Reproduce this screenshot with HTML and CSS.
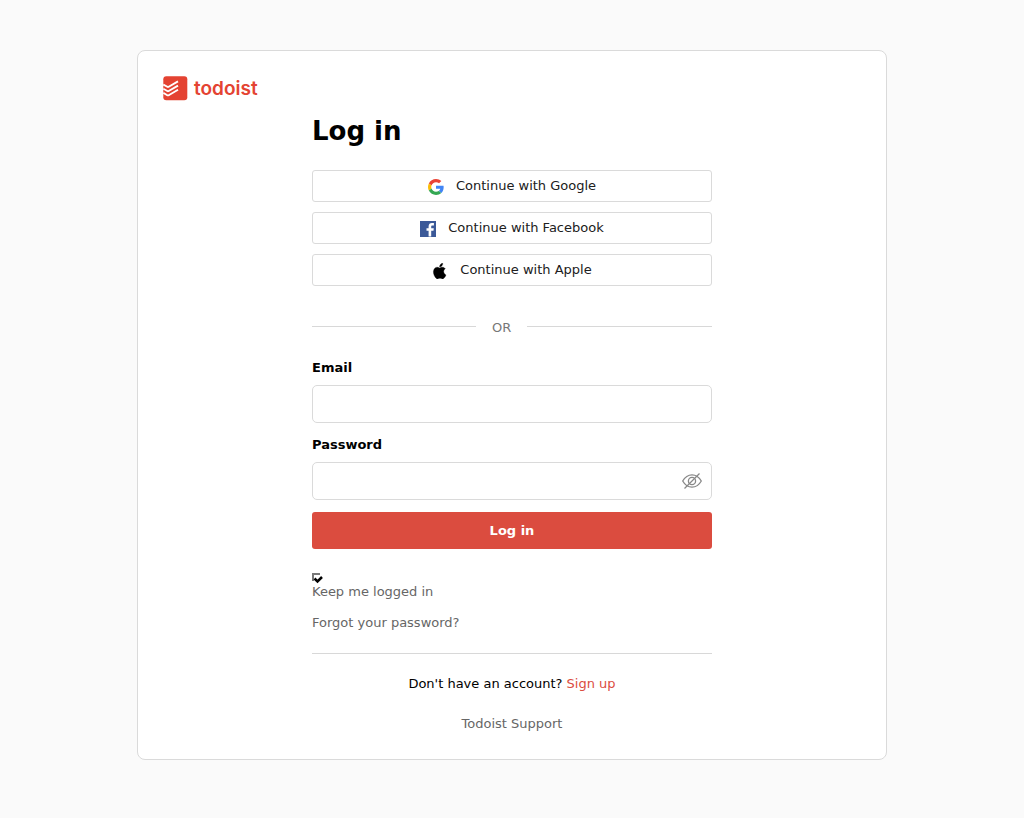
FILE: index.html
```html
<!DOCTYPE html>
<html lang="en">
<head>
<meta charset="utf-8">
<meta name="viewport" content="width=device-width, initial-scale=1">
<title>Todoist: Log in</title>
<link rel="stylesheet" href="styles.css">
</head>
<body>
<main class="card">
  <a class="brand" href="#" aria-label="Todoist home">
    <svg class="brand-mark" viewBox="0 0 25 25" aria-hidden="true">
      <rect x="0.3" y="0.3" width="24" height="24" rx="3" fill="#e44332"/>
      <g fill="none" stroke="#fff" stroke-width="1.9" stroke-linejoin="round">
        <path d="M0.300 8.500 L4.300 10.800 Q5 11.200 5.700 10.800 L15 5.400"/>
        <path d="M0.300 12.700 L4.300 15 Q5 15.400 5.700 15 L15 9.600"/>
        <path d="M0.300 16.900 L4.300 19.200 Q5 19.600 5.700 19.200 L15 13.800"/>
      </g>
    </svg>
    <span class="brand-name">todoist</span>
  </a>

  <div class="content">
    <h1 class="title">Log in</h1>

    <div class="providers">
      <button class="provider" type="button">
        <svg class="provider-icon" viewBox="0 0 48 48" aria-hidden="true">
          <path fill="#ea4335" d="M24 9.5c3.54 0 6.71 1.22 9.21 3.6l6.85-6.85C35.9 2.38 30.47 0 24 0 14.62 0 6.51 5.38 2.56 13.22l7.98 6.19C12.43 13.72 17.74 9.5 24 9.5z"/>
          <path fill="#4285f4" d="M46.98 24.55c0-1.57-.15-3.09-.38-4.55H24v9.02h12.94c-.58 2.96-2.26 5.48-4.78 7.18l7.73 6c4.51-4.18 7.09-10.36 7.09-17.65z"/>
          <path fill="#fbbc05" d="M10.53 28.59c-.48-1.45-.76-2.99-.76-4.59s.27-3.14.76-4.59l-7.98-6.19C.92 16.46 0 20.12 0 24c0 3.88.92 7.54 2.56 10.78l7.97-6.19z"/>
          <path fill="#34a853" d="M24 48c6.48 0 11.93-2.13 15.89-5.81l-7.73-6c-2.15 1.45-4.92 2.3-8.16 2.3-6.26 0-11.57-4.22-13.47-9.91l-7.98 6.19C6.51 42.62 14.62 48 24 48z"/>
        </svg>
        Continue with Google
      </button>
      <button class="provider" type="button">
        <svg class="provider-icon" viewBox="0 0 16 16" aria-hidden="true">
          <rect width="16" height="16" fill="#3b5998"/>
          <path fill="#fff" d="M8.600 15.500V9.700H6.500V7.200h2.100V5.400c0-2.200 1.400-3.400 3.300-3.400.9 0 1.700.1 2 .1v2.300h-1.400c-1 0-1.300.5-1.300 1.200v1.600h2.600l-.3 2.500h-2.300v5.800z"/>
        </svg>
        Continue with Facebook
      </button>
      <button class="provider" type="button">
        <svg class="provider-icon" viewBox="1 1 14 14" aria-hidden="true">
          <path d="M11.2 8.500c0-1.600 1.300-2.400 1.400-2.500-.8-1.100-2-1.300-2.400-1.300-1-.1-2 .6-2.500.6s-1.300-.6-2.200-.6C4.400 4.700 3.400 5.400 2.800 6.400c-1.200 2.100-.3 5.100.9 6.800.6.800 1.200 1.700 2.100 1.700.8 0 1.200-.5 2.200-.5s1.300.5 2.200.5c.9 0 1.500-.8 2.100-1.600.6-.9.900-1.800.9-1.900 0 0-2-.7-2-2.900zM9.700 3.500c.5-.6.8-1.400.7-2.200-.7 0-1.500.5-2 1-.4.500-.8 1.300-.7 2.100.8.1 1.500-.4 2-.9z" stroke="#000" stroke-width="0.300"/>
        </svg>
        Continue with Apple
      </button>
    </div>

    <div class="divider">OR</div>

    <form class="form">
      <label class="label" for="email">Email</label>
      <input class="field field-email" id="email" type="email" name="email">
      <label class="label" for="password">Password</label>
      <div class="password">
        <input class="field field-password" id="password" type="password" name="password">
        <button class="reveal" type="button" aria-label="Show password">
          <svg class="reveal-icon" viewBox="0 0 20 20" fill="none" stroke="#888" stroke-width="1.300" aria-hidden="true">
            <path d="M0.700 10C3 6 6.200 3.800 10 3.800S17 6 19.300 10C17 14 13.800 16.200 10 16.200S3 14 0.700 10z"/>
            <circle cx="10" cy="10" r="3.600"/>
            <path d="M2.500 17.500L17.500 2.500"/>
          </svg>
        </button>
      </div>
      <button class="submit" type="submit">Log in</button>
      <div class="remember">
        <input class="remember-box" id="remember" type="checkbox" checked>
        <label class="remember-label" for="remember">Keep me logged in</label>
      </div>
      <a class="forgot" href="#">Forgot your password?</a>
    </form>

    <div class="footer">
      <p class="signup">Don't have an account? <a class="signup-link" href="#">Sign up</a></p>
      <a class="support" href="#">Todoist Support</a>
    </div>
  </div>
</main>
</body>
</html>
```
FILE: styles.css
```css
* {
  box-sizing: border-box;
}

body {
  margin: 0;
  padding: 50px 16px;
  background: #fafafa;
  color: #000;
  font: 13px/16px "DejaVu Sans", sans-serif;
}

button,
input {
  font: inherit;
}

a {
  color: #666;
  text-decoration: none;
}

.card {
  max-width: 750px;
  margin: 0 auto;
  padding: 25px 25px 27px;
  border: 1px solid #dadada;
  border-radius: 8px;
  background: #fff;
}

.brand {
  display: flex;
  align-items: center;
  gap: 6px;
  color: #e44332;
}

.brand-mark {
  width: 25px;
  height: 25px;
}

.brand-name {
  font: 600 19px/24px Inter, sans-serif;
}

.content {
  max-width: 400px;
  margin: 0 auto;
}

.title {
  margin: 15px 0 24px;
  font-size: 26px;
  line-height: 30px;
}

.providers {
  display: flex;
  flex-direction: column;
  gap: 10px;
}

.provider {
  display: flex;
  align-items: center;
  justify-content: center;
  gap: 12px;
  height: 32px;
  padding: 0 12px 1px;
  border: 1px solid #dadada;
  border-radius: 3px;
  background: #fff;
  color: #202020;
}

.provider-icon {
  width: 16px;
  height: 16px;
  margin-top: 2px;
}

.divider {
  display: flex;
  align-items: flex-start;
  gap: 16px;
  margin: 34px 0 24px;
  color: #777;
}

.divider::before,
.divider::after {
  content: "";
  height: 1px;
  margin-top: 6px;
  background: #d8d8d8;
}

.divider::before {
  width: 41%;
}

.divider::after {
  flex: 1;
}

.form {
  display: flex;
  flex-direction: column;
}

.label {
  margin-bottom: 9px;
  font-weight: 700;
}

.field {
  width: 100%;
  height: 38px;
  padding: 0 10px;
  border: 1px solid #dadada;
  border-radius: 5px;
  background: #fff;
}

.field-email {
  margin-bottom: 14px;
}

.password {
  position: relative;
  display: flex;
}

.field-password {
  padding-right: 40px;
}

.reveal {
  position: absolute;
  top: 9px;
  right: 10px;
  padding: 0;
  border: 0;
  background: none;
}

.reveal-icon {
  display: block;
  width: 20px;
  height: 20px;
}

.submit {
  height: 37px;
  margin: 12px 0 24px;
  border: 0;
  border-radius: 3px;
  background: #db4c3f;
  color: #fff;
  font-weight: 700;
}

.remember {
  display: flex;
  flex-direction: column;
  align-items: flex-start;
  margin-bottom: 15px;
  color: #666;
}

.remember-box {
  appearance: none;
  width: 11px;
  height: 11px;
  margin: 0;
}

.remember-box:checked {
  background: url("data:image/svg+xml,%3Csvg xmlns='http://www.w3.org/2000/svg' viewBox='0 0 11 11'%3E%3Cpath d='M1 8V1h7' fill='none' stroke='%23777' stroke-width='2'/%3E%3Cpath d='M2.500 5.500L5.500 8.500L10 4' fill='none' stroke='%23000' stroke-width='2.500'/%3E%3C/svg%3E");
}

.forgot {
  align-self: flex-start;
}

.footer {
  display: flex;
  flex-direction: column;
  align-items: center;
  gap: 24px;
  margin-top: 22px;
  padding-top: 22px;
  border-top: 1px solid #d8d8d8;
}

.signup {
  margin: 0;
}

.signup-link {
  color: #db4c3f;
}
```
